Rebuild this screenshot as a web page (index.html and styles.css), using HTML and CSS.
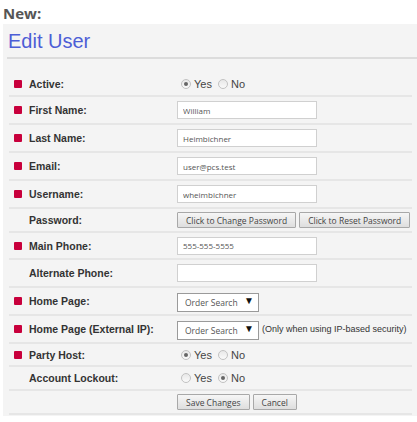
FILE: index.html
```html
<!DOCTYPE html>
<html lang="en">
<head>
    <meta charset="UTF-8">
    <title>Edit User</title>
    <link rel="stylesheet" href="styles.css">
</head>
<body>
    <div class="page-label">New:</div>

    <div class="panel">
        <div class="panel-title">Edit User</div>

        <div class="form">
            <div class="row short">
                <span class="req"></span>
                <label class="field">Active:</label>
                <div class="radios">
                    <label><input type="radio" name="active" checked> Yes</label>
                    <label><input type="radio" name="active"> No</label>
                </div>
            </div>
            <div class="row">
                <span class="req"></span>
                <label class="field">First Name:</label>
                <input type="text" class="text" value="William">
            </div>
            <div class="row">
                <span class="req"></span>
                <label class="field">Last Name:</label>
                <input type="text" class="text" value="Heimbichner">
            </div>
            <div class="row">
                <span class="req"></span>
                <label class="field">Email:</label>
                <input type="text" class="text" value="user@pcs.test">
            </div>
            <div class="row">
                <span class="req"></span>
                <label class="field">Username:</label>
                <input type="text" class="text" value="wheimbichner">
            </div>
            <div class="row short">
                <span class="req blank"></span>
                <label class="field">Password:</label>
                <div class="buttons">
                    <button class="btn">Click to Change Password</button>
                    <button class="btn">Click to Reset Password</button>
                </div>
            </div>
            <div class="row phone">
                <span class="req"></span>
                <label class="field">Main Phone:</label>
                <input type="text" class="text" value="555-555-5555">
            </div>
            <div class="row">
                <span class="req blank"></span>
                <label class="field">Alternate Phone:</label>
                <input type="text" class="text" value="">
            </div>
            <div class="row">
                <span class="req"></span>
                <label class="field">Home Page:</label>
                <div class="select-wrap">
                    <select class="select"><option>Order Search</option></select>
                </div>
            </div>
            <div class="row">
                <span class="req"></span>
                <label class="field">Home Page (External IP):</label>
                <div class="select-wrap">
                    <select class="select"><option>Order Search</option></select>
                </div>
                <span class="note">(Only when using IP-based security)</span>
            </div>
            <div class="row radio-row">
                <span class="req"></span>
                <label class="field">Party Host:</label>
                <div class="radios">
                    <label><input type="radio" name="host" checked> Yes</label>
                    <label><input type="radio" name="host"> No</label>
                </div>
            </div>
            <div class="row short">
                <span class="req blank"></span>
                <label class="field">Account Lockout:</label>
                <div class="radios">
                    <label><input type="radio" name="lockout"> Yes</label>
                    <label><input type="radio" name="lockout" checked> No</label>
                </div>
            </div>
            <div class="row short">
                <span class="req blank"></span>
                <span class="field"></span>
                <div class="buttons">
                    <button class="btn">Save Changes</button>
                    <button class="btn">Cancel</button>
                </div>
            </div>
        </div>
    </div>
</body>
</html>
```

FILE: styles.css
```css
body {
    margin: 0;
    font-family: "Liberation Sans", Arial, sans-serif;
    background-color: #fff;
    color: #333;
}
.page-label {
    font-family: "Open Sans", sans-serif;
    font-weight: 700;
    font-size: 15px;
    line-height: 20px;
    color: #555;
    padding: 3px 3px 0;
    height: 21px;
}
.panel {
    margin: 0 0 0 3px;
    background-color: #f4f4f4;
    padding: 0 0 1px 4px;
}
.panel-title {
    font-size: 20px;
    line-height: 23px;
    color: #4d5ed6;
    padding: 6px 0 4px 1px;
    border-bottom: 2px solid #dcdcdc;
}
.form {
    margin: 14px 5px 0 2px;
}
.row {
    display: flex;
    align-items: center;
    height: 28px;
    box-sizing: border-box;
    border-bottom: 2px solid #e6e6e6;
    padding-left: 5px;
}
.row.short {
    height: 24px;
}
.row.phone {
    height: 27px;
}
.row.radio-row {
    height: 23px;
}
.req {
    width: 8px;
    height: 8px;
    border-radius: 1px;
    background-color: #c8003c;
    margin-right: 7px;
    flex-shrink: 0;
}
.req.blank {
    background-color: transparent;
}
.field {
    width: 148px;
    flex-shrink: 0;
    font-size: 10.5px;
    font-weight: bold;
    color: #333;
}
.text {
    width: 140px;
    height: 18px;
    box-sizing: border-box;
    border: 1px solid #d0d0d0;
    background-color: #fff;
    padding: 0 5px;
    font-family: "Open Sans", sans-serif;
    font-size: 8px;
    color: #555;
    margin: 0;
}
.radios {
    display: flex;
    align-items: center;
    gap: 6px;
    font-size: 11px;
    color: #444;
    padding-left: 4px;
}
.radios label {
    display: flex;
    align-items: center;
    gap: 3px;
}
.radios input {
    appearance: none;
    -webkit-appearance: none;
    width: 10px;
    height: 10px;
    margin: 0;
    border: 1px solid #c2c2c2;
    border-radius: 50%;
    background: linear-gradient(#e8e8e8, #fafafa);
    box-sizing: border-box;
    position: relative;
}
.radios input:checked::after {
    content: "";
    position: absolute;
    left: 2px;
    top: 2px;
    width: 4px;
    height: 4px;
    border-radius: 50%;
    background-color: #666;
}
.buttons {
    display: flex;
    gap: 3px;
}
.btn {
    height: 16px;
    padding: 0 8px;
    white-space: nowrap;
    font-family: "Open Sans", sans-serif;
    font-size: 8.5px;
    color: #444;
    border: 1px solid #a8a8a8;
    border-radius: 1px;
    background: linear-gradient(#f6f6f6, #dedede);
    cursor: pointer;
}
.select-wrap {
    position: relative;
    width: 82px;
    height: 19px;
}
.select {
    appearance: none;
    -webkit-appearance: none;
    width: 100%;
    height: 100%;
    box-sizing: border-box;
    border: 1px solid #9a9a9a;
    border-radius: 0;
    background-color: #fff;
    padding: 0 0 0 7px;
    font-family: "Open Sans", sans-serif;
    font-size: 8.5px;
    color: #555;
    margin: 0;
}
.select-wrap::after {
    content: "\25BC";
    position: absolute;
    right: 5px;
    top: 3px;
    font-size: 10px;
    color: #111;
    pointer-events: none;
}
.note {
    font-size: 9px;
    color: #333;
    margin-left: 3px;
}
```
